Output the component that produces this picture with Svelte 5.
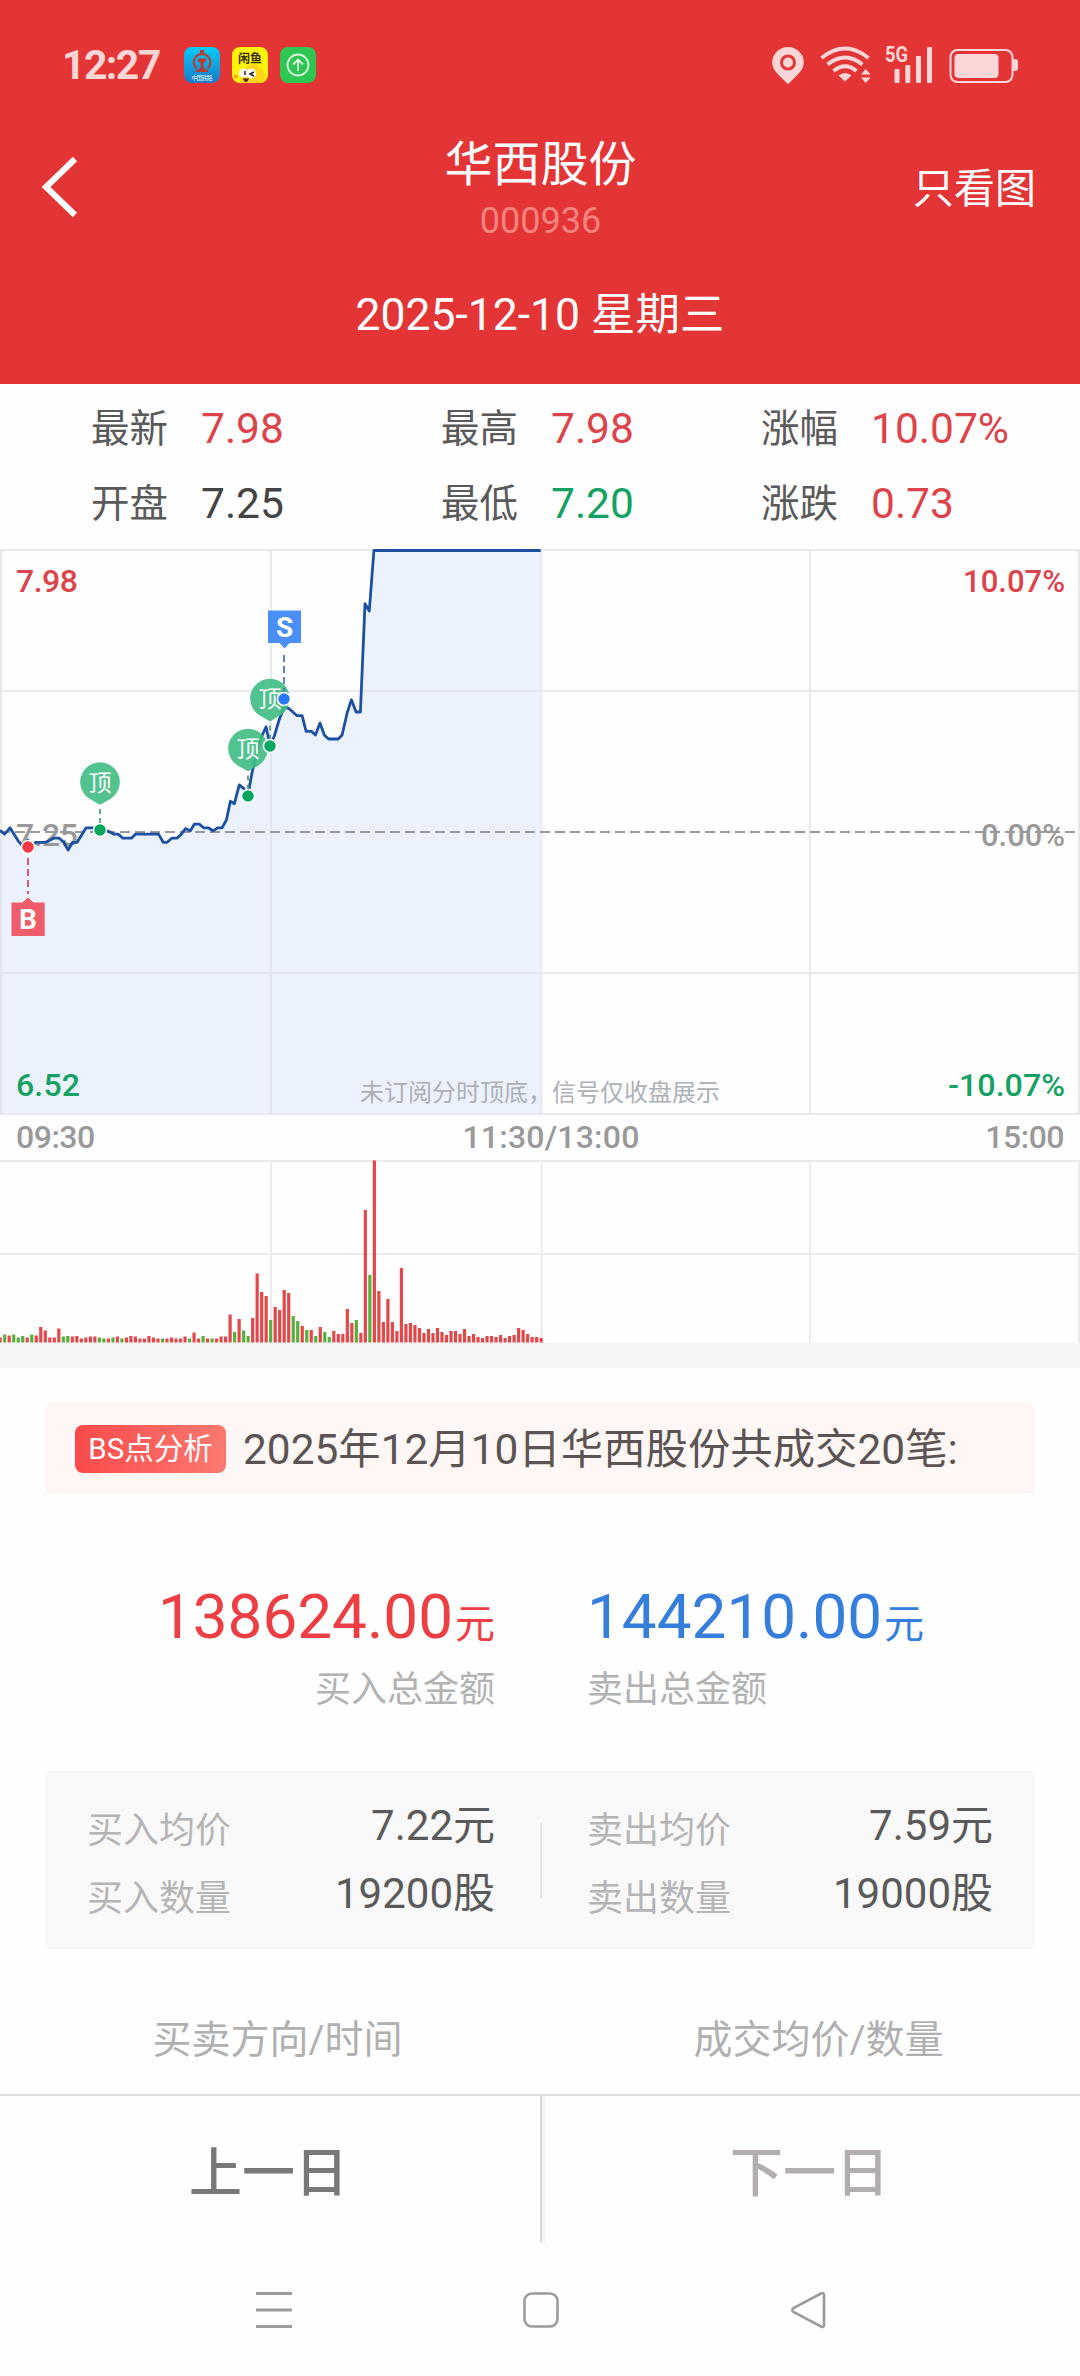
<script>
  const quotes = [
    { label: "最新", value: "7.98", tone: "up" },
    { label: "最高", value: "7.98", tone: "up" },
    { label: "涨幅", value: "10.07%", tone: "up" },
    { label: "开盘", value: "7.25", tone: "flat" },
    { label: "最低", value: "7.20", tone: "down" },
    { label: "涨跌", value: "0.73", tone: "up" },
  ];

  // intraday price line, x / y in chart pixels
  const price = [
    [0, 281.4], [4.6, 285.1], [10, 278.8], [18.6, 292.5], [23.2, 297.3], [27.9, 291], [32, 297],
    [35.7, 293.3], [45.7, 293.3], [53.6, 289.2], [59.3, 289.2], [63.6, 293.3], [68.2, 301],
    [72.5, 293.3], [77.1, 293.3], [86.1, 278.8], [100, 278.8], [108.9, 282.5], [113.6, 285.1],
    [118.2, 285.1], [122.9, 289.2], [131.4, 289.2], [135.7, 285.1], [158.6, 285.1],
    [163.2, 293.3], [167.1, 293.3], [171.8, 289.2], [176.8, 289.2], [181.4, 285.1],
    [185.4, 279.6], [190.4, 281.8], [194.3, 275.1], [199.3, 275.1], [203.6, 278.8],
    [208.2, 278.8], [213.2, 281.8], [217.5, 278.8], [222.1, 278.8], [226.4, 271],
    [230.4, 252.2], [234.3, 254.8], [239.3, 235.9], [243.9, 239.6], [247.9, 246.3],
    [252.1, 223.3], [256.8, 203.7], [261.8, 187], [266.1, 177.8], [270, 196.7], [274.3, 187],
    [279.3, 170.4], [283.9, 158.2], [288.6, 159.3], [297.1, 166.7], [302.1, 166.7],
    [306.1, 182.3], [311.4, 182.3], [315.4, 186], [320, 174.1], [324.3, 186], [328.6, 190],
    [338.2, 190], [342.1, 186], [347.1, 164.1], [351.4, 150.8], [356.1, 163], [360.4, 163],
    [365, 54.6], [369.3, 62], [373.9, 1.5], [540.7, 1.5],
  ];
  const line = price.map((p) => p.join(",")).join(" ");
  const area = `0,564 ${line} 540.7,564`;

  const tops = [
    { x: 100, y: 233, dot: 281 },
    { x: 248, y: 199.5, dot: 247 },
    { x: 270, y: 149.5, dot: 197 },
  ];

  // volume per minute, negative = falling minute
  const volumes = [
    5, -8, 7, -8, -5, -6.5, 5, -8, 7, 15.5, 12, 5, 5, 14, -6, -6.5, 6, 6.5, 4, 5,
    6, 6, -5, -4, 4, -5, 6, -4, 5, 6.5, 6, 4, 4, 6.5, 5, 4, -4, 4, 5, 4,
    4, 6, -4, 10, 4, -6.5, 4, -4, 4, 6, 6, 28, -10.5, 23.5, -12, -6.5, 24.5, 69, 50.5, 46.5,
    -22.5, 35.5, 32.5, 52.5, 49.5, -26.5, -21.5, 16.5, -12.5, 12.5, -6.5, 15.5, -10.5, -5.5, 11.5, 8.5, 8.5, 33.5, 19.5, -22.5,
    9.5, 132.5, -67.5, 182, 51.5, 20.5, 43.5, 20.5, 11.5, 74.5, 18.5, 19.5, 17.5, 14.5, 9.5, 13.5, 9.5, 14.5, 10.5, 7.5,
    11.5, 11.5, 8.5, 13.5, 6.5, 8.5, 5.5, 4.5, 6.5, 6.5, 5.5, 7.5, 4.5, 6.5, 7.5, 14.5, 12.5, 8.5, 5.5, 5.5, 4.5,
  ];
  const step = 4.508;

  const columns = [1, 271, 541.5, 810, 1079];

  const summary = [
    [
      { label: "买入均价", value: "7.22元" },
      { label: "买入数量", value: "19200股" },
    ],
    [
      { label: "卖出均价", value: "7.59元" },
      { label: "卖出数量", value: "19000股" },
    ],
  ];
</script>

<div class="screen">
  <header>
    <div class="status">
      <span class="clock">12:27</span>
      <div class="apps">
        <svg width="36" height="36" viewBox="0 0 36 36">
          <defs>
            <linearGradient id="rail" x1="0" y1="0" x2="0" y2="1">
              <stop offset="0" stop-color="#06ccfb" />
              <stop offset="1" stop-color="#1c78c4" />
            </linearGradient>
          </defs>
          <rect width="36" height="36" rx="8" fill="url(#rail)" />
          <path d="M12.500 21.500A8.300 8.300 0 1 1 23.500 21.500" fill="none" stroke="#a8483c" stroke-width="2.400" />
          <path d="M16 3h4v3h-4zM14 11.500h8v3l-2.500 1v5.500l4.500 2.500V25H12v-1.500l4.500-2.500v-5.500L14 14.500z" fill="#b8392e" />
          <text x="18" y="33" textLength="21" font-size="6" text-anchor="middle" fill="#dff2ff">中国铁路</text>
        </svg>
        <svg width="36" height="36" viewBox="0 0 36 36">
          <rect width="36" height="36" rx="8" fill="#fff20c" />
          <path d="M8 36C9 20 20 14 27 19C33 23 34 30 31 36Z" fill="#ffd51a" />
          <text x="18" y="15.500" font-size="12" font-weight="700" text-anchor="middle" fill="#33300a">闲鱼</text>
          <circle cx="11.500" cy="26" r="4.500" fill="#fff" />
          <circle cx="19" cy="26.500" r="5" fill="#fff" />
          <path d="M13 24v4M22 25l-4 2 4 2" fill="none" stroke="#222" stroke-width="1.500" />
          <path d="M11 31q3.500 1 6 0-1 4-3 4t-3-4z" fill="#5a1d10" />
          <circle cx="4" cy="29.500" r="2" fill="#ffa51a" />
        </svg>
        <svg width="36" height="36" viewBox="0 0 36 36">
          <rect width="36" height="36" rx="8" fill="#2fc552" />
          <g fill="none" stroke="#d9f7de" stroke-width="1.800">
            <circle cx="18" cy="18" r="10.500" />
            <path d="M18 24V12.500M13 17.500l5-5 5 5" />
          </g>
        </svg>
      </div>
      <svg class="signals" width="236" height="40" viewBox="0 0 236 40">
        <g fill="#fbd6d6">
          <path fill-rule="evenodd" d="M17 2A15.800 15.800 0 0 0 1.200 17.500C1.200 26 10 31.500 15.500 38q1.500 1.600 3 0C24 31.500 32.800 26 32.800 17.500A15.800 15.800 0 0 0 17 2ZM17 9.500a8 8 0 1 1 0 16 8 8 0 0 1 0-16Z" />
          <circle cx="17" cy="17.500" r="5" />
          <path d="M67.500 31.500q6.500-5 13 0L74 37.500z" transform="translate(0 -1)" />
          <path d="M90 29.500l4.800-5.500 4.800 5.500zM90 32.500h9.600L94.800 38z" />
          <rect x="123.500" y="24" width="5" height="14" rx="1" />
          <rect x="134.300" y="20" width="5" height="18" rx="1" />
          <rect x="145" y="11" width="5" height="27" rx="1" />
          <rect x="156" y="2" width="5" height="36" rx="1" />
          <rect x="183.500" y="9" width="44" height="24" rx="4" />
          <path d="M242 14h2q3 0 3 3v6q0 3-3 3h-2z" />
        </g>
        <g fill="none" stroke="#fbd6d6">
          <path d="M50.500 13Q74 -6 97.500 13M56.500 19.500Q74 5.500 91.500 19.500M62.500 26Q74 16.500 85.500 26" stroke-width="3.800" />
          <rect x="179.500" y="5" width="62" height="32" rx="7" stroke-width="2" />
        </g>
        <text class="net" x="114" y="17" textLength="23" lengthAdjust="spacingAndGlyphs">5G</text>
      </svg>
    </div>
    <div class="nav">
      <svg width="40" height="62" viewBox="0 0 40 62">
        <path d="M34 3L5 31l29 28" fill="none" stroke="#fff" stroke-width="6" />
      </svg>
      <div class="title">
        <h1>华西股份</h1>
        <p>000936</p>
      </div>
      <span class="only-chart">只看图</span>
    </div>
    <div class="date">2025-12-10 星期三</div>
  </header>

  <section class="quotes">
    {#each quotes as quote}
      <div class="quote">
        <span class="label">{quote.label}</span>
        <span class={quote.tone}>{quote.value}</span>
      </div>
    {/each}
  </section>

  <svg width="1080" height="566" viewBox="0 0 1080 566">
    <polygon points={area} fill="#ebf2fe" />
    <g stroke="#dfe3e8" stroke-opacity="0.750" stroke-width="2">
      {#each columns as x}
        <line x1={x} x2={x} y1="1" y2="565" />
      {/each}
      {#each [1, 142, 424, 565] as y}
        <line x1="0" x2="1080" y1={y} y2={y} />
      {/each}
    </g>
    <line x1="0" x2="1080" y1="283" y2="283" stroke="#999" stroke-width="2" stroke-dasharray="10 5" />
    <text class="axis up" x="16" y="43" textLength="62">7.98</text>
    <text class="axis mid" x="16" y="297" textLength="62">7.25</text>
    <text class="axis down" x="16" y="547" textLength="64">6.52</text>
    <text class="axis up" x="963" y="43" textLength="102" lengthAdjust="spacingAndGlyphs">10.07%</text>
    <text class="axis mid" x="981" y="297" textLength="84" lengthAdjust="spacingAndGlyphs">0.00%</text>
    <text class="axis down" x="948" y="547" textLength="117" lengthAdjust="spacingAndGlyphs">-10.07%</text>
    <text class="hint" x="360" y="552">未订阅分时顶底，信号仅收盘展示</text>
    <polyline points={line} fill="none" stroke="#1d4fa3" stroke-width="2.800" stroke-linejoin="round" />

    {#each tops as top}
      <line x1={top.x} x2={top.x} y1={top.y + 27} y2={top.dot} stroke="#5b9a80" stroke-width="1.800" stroke-dasharray="5 4" />
      <g transform="translate({top.x} {top.y})">
        <path d="M-11 16.500A19.800 19.800 0 1 1 11 16.500L1.500 22q-1.500 1-3 0Z" fill="#3fbb83" fill-opacity="0.900" />
        <text class="pin" y="8.500">顶</text>
      </g>
      <circle cx={top.x} cy={top.dot} r="6.500" fill="#06a65e" stroke="#fff" stroke-width="1.500" />
    {/each}

    <line x1="284" x2="284" y1="106" y2="146" stroke="#4a78b8" stroke-width="1.800" stroke-dasharray="7 4" />
    <path d="M268 61.500h33V94h-11.500l-5 5.500-5-5.500H268z" fill="#4a8ef8" />
    <text class="flag" x="284.500" y="88">S</text>
    <circle cx="284" cy="150" r="6.500" fill="#2b78fb" stroke="#fff" stroke-width="1.500" />

    <line x1="28" x2="28" y1="309" y2="345" stroke="#d6476a" stroke-width="1.800" stroke-dasharray="7 4" />
    <path d="M11.500 353.500h11l5.500-5 5.500 5h11.200V387H11.500z" fill="#ee5d69" />
    <text class="flag" x="28" y="380">B</text>
    <circle cx="28" cy="298" r="6.500" fill="#f23a44" stroke="#fff" stroke-width="1.500" />
  </svg>

  <div class="times">
    <span>09:30</span>
    <span>11:30/13:00</span>
    <span>15:00</span>
  </div>

  <svg width="1080" height="183" viewBox="0 0 1080 183">
    <g stroke="#e9ebec" stroke-width="2">
      {#each columns.slice(1) as x}
        <line x1={x} x2={x} y1="1" y2="183" />
      {/each}
      <line x1="0" x2="1080" y1="1" y2="1" />
      <line x1="0" x2="1080" y1="94" y2="94" />
    </g>
    {#each volumes as v, i}
      <rect
        x={i * step - 1.4}
        y={182.5 - Math.abs(v)}
        width="3.200"
        height={Math.abs(v)}
        fill={v < 0 ? "#5aad3f" : "#e2484a"}
      />
    {/each}
  </svg>

  <div class="band"></div>

  <section class="analysis">
    <span class="tag">BS点分析</span>
    <span class="deals">2025年12月10日华西股份共成交20笔:</span>
  </section>

  <section class="totals">
    <div class="buy">
      <div class="amount">138624.00<small>元</small></div>
      <div class="caption">买入总金额</div>
    </div>
    <div class="sell">
      <div class="amount">144210.00<small>元</small></div>
      <div class="caption">卖出总金额</div>
    </div>
  </section>

  <section class="summary">
    {#each summary as side}
      <div class="side">
        {#each side as item}
          <div class="item">
            <span class="name">{item.label}</span>
            <span>{item.value}</span>
          </div>
        {/each}
      </div>
    {/each}
  </section>

  <div class="thead">
    <span>买卖方向/时间</span>
    <span>成交均价/数量</span>
  </div>

  <footer>
    <button>上一日</button>
    <button class="next">下一日</button>
  </footer>

  <div class="system">
    <svg width="40" height="40" viewBox="0 0 40 40">
      <path d="M2 3.500h36M2 20h36M2 36.500h36" stroke-width="3" />
    </svg>
    <svg width="40" height="40" viewBox="0 0 40 40">
      <rect x="3.500" y="3.500" width="33" height="33" rx="7.500" stroke-width="2.600" />
    </svg>
    <svg width="40" height="40" viewBox="0 0 40 40">
      <path d="M33 3.500q3-1.500 3 2v29q0 3.500-3 2L5.500 22q-2.500-2 0-4z" stroke-width="2.600" />
    </svg>
  </div>
</div>

<style>
  :global(body) {
    background: #fefefe;
  }

  .screen {
    width: 1080px;
    height: 2376px;
    overflow: hidden;
    display: flex;
    flex-direction: column;
    background: #fefefe;
    color: #5a5a5a;
    font-family: Roboto, "Noto Sans CJK SC", sans-serif;
    line-height: 1;
  }

  .screen > * {
    flex: none;
  }

  svg {
    display: block;
    flex: none;
  }

  header {
    height: 384px;
    background: #e33536;
    color: #fff;
  }

  .status {
    display: flex;
    align-items: center;
    box-sizing: border-box;
    height: 126px;
    padding: 4px 63px 0 62px;
  }

  .clock {
    width: 122px;
    font-size: 41px;
    font-weight: 700;
    letter-spacing: -1.6px;
    color: #fcd5d5;
  }

  .apps {
    display: flex;
    gap: 12px;
  }

  .signals {
    margin-left: auto;
    margin-right: 10px;
    overflow: visible;
  }

  .net {
    font-size: 22px;
    font-weight: 700;
    fill: #fbd6d6;
  }

  .nav {
    display: grid;
    grid-template-columns: 1fr auto 1fr;
    align-items: center;
    height: 120px;
    padding: 0 44px 0 41px;
  }

  .title {
    align-self: start;
    padding-top: 9px;
    margin-left: 4px;
    text-align: center;
  }

  h1 {
    margin: 0;
    font-size: 48px;
    font-weight: 400;
    line-height: 60px;
  }

  p {
    margin: 0;
    font-size: 36px;
    line-height: 52px;
    color: #f5847e;
  }

  .only-chart {
    justify-self: end;
    padding-top: 5px;
    font-size: 41px;
    line-height: 60px;
  }

  .date {
    font-size: 44.5px;
    line-height: 138px;
    text-align: center;
  }

  .quotes {
    display: grid;
    grid-template-columns: 350px 320px 1fr;
    grid-auto-rows: 75px;
    box-sizing: border-box;
    height: 165px;
    padding: 8px 0 7px 91px;
  }

  .quote {
    display: flex;
    align-items: center;
    gap: 33px;
    font-size: 42.5px;
  }

  .quote .label {
    font-size: 38.5px;
  }

  .up {
    color: #dc434b;
    fill: #dc434b;
  }

  .down {
    color: #14a164;
    fill: #14a164;
  }

  .flat {
    color: #444;
  }

  .mid {
    fill: #999;
  }

  .axis {
    font-size: 32px;
    font-weight: 500;
  }

  .hint {
    font-size: 24px;
    fill: #adb1b5;
  }

  .pin {
    font-size: 23px;
    text-anchor: middle;
    fill: #fff;
  }

  .flag {
    font-size: 28px;
    font-weight: 700;
    text-anchor: middle;
    fill: #fff;
  }

  .times {
    display: flex;
    justify-content: space-between;
    padding: 0 16px;
    font-size: 32px;
    font-weight: 500;
    line-height: 45px;
    letter-spacing: -0.5px;
    color: #999;
  }

  .times span:nth-child(2) {
    margin-left: 22px;
    letter-spacing: 0.2px;
  }

  .band {
    height: 25px;
    background: #f6f6f6;
  }

  .analysis {
    display: flex;
    align-items: center;
    gap: 17px;
    height: 91px;
    margin: 34px 45px 0;
    padding-left: 30px;
    border-radius: 6px;
    background: #fef7f6;
    color: #5c5454;
    font-size: 42.4px;
  }

  .tag {
    width: 151px;
    margin-top: 2px;
    border-radius: 8px;
    background: linear-gradient(90deg, #f94a4b, #fb7970);
    color: #fff;
    font-size: 29.5px;
    line-height: 48px;
    text-align: center;
  }

  .deals {
    padding-top: 5px;
  }

  .totals {
    display: grid;
    grid-template-columns: 541px 1fr;
    margin-top: 87px;
  }

  .buy {
    padding-right: 46px;
    text-align: right;
    color: #ec3e43;
  }

  .sell {
    padding-left: 46px;
    color: #367edb;
  }

  .amount {
    height: 74px;
    font-size: 62px;
    line-height: 74px;
  }

  .amount small {
    margin-left: 2px;
    font-size: 40px;
    line-height: 1;
  }

  .caption {
    margin-top: 11px;
    font-size: 36px;
    line-height: 50px;
    color: #b2b2b2;
  }

  .summary {
    display: grid;
    grid-template-columns: 496px 494px;
    box-sizing: border-box;
    height: 178px;
    margin: 56px 45px 0;
    padding-top: 21px;
    border-radius: 4px;
    background: linear-gradient(#e8e8e8, #e8e8e8) 495px 52px / 2px 75px no-repeat #f9f9f9;
  }

  .side {
    padding: 0 46px 0 42px;
  }

  .side + .side {
    padding: 0 42px 0 46px;
  }

  .item {
    display: flex;
    align-items: center;
    justify-content: space-between;
    height: 68px;
    font-size: 42px;
  }

  .name {
    margin-top: 10px;
    font-size: 36px;
    color: #b5b5b5;
  }

  .thead {
    display: grid;
    grid-template-columns: 541px 541px;
    height: 84px;
    margin-top: 61px;
    padding-left: 7px;
    font-size: 39px;
    line-height: 60px;
    text-align: center;
    color: #b0b0b0;
  }

  footer {
    display: grid;
    grid-template-columns: 1fr 1fr;
    height: 147px;
    border-top: 2px solid #dcdcdc;
  }

  button {
    padding: 9px 3px 0 0;
    border: 0;
    background: none;
    font-family: inherit;
    font-size: 53px;
    font-weight: 500;
    line-height: 1;
    color: #787878;
  }

  button.next {
    border-left: 2px solid #dadada;
    box-shadow: inset 5px 0 4px -3px #eee;
    color: #b3aeae;
  }

  .system {
    display: grid;
    grid-template-columns: repeat(3, 1fr);
    place-items: center;
    height: 133px;
    padding: 0 139px 0 141px;
  }

  .system svg {
    fill: none;
    stroke: #9c9c9c;
  }
</style>
